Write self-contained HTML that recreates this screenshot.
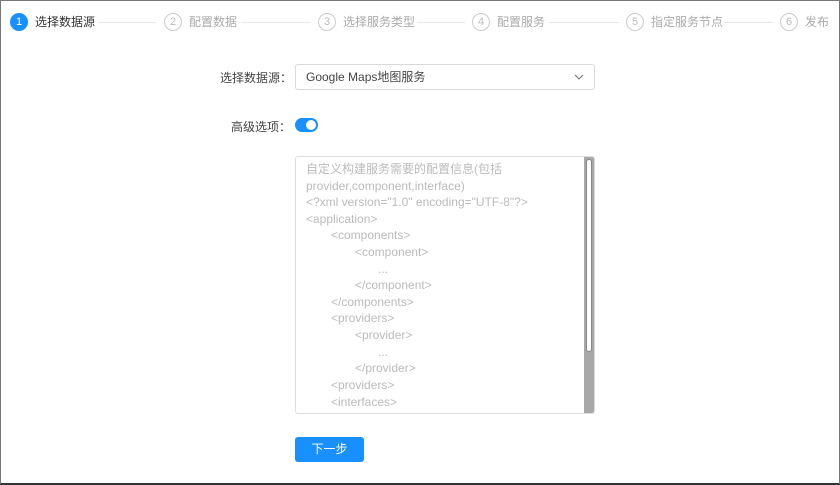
<!DOCTYPE html>
<html><head><meta charset="utf-8"><style>
*{margin:0;padding:0;box-sizing:border-box}
body{width:840px;height:485px;overflow:hidden;background:#fff;font-family:"Liberation Sans","Noto Sans CJK SC",sans-serif;position:relative}
.frame{position:absolute;left:0;top:0;width:840px;height:485px;border:1px solid #777;border-bottom:2px solid #333}
.c{position:absolute;top:13px;width:18px;height:18px;border-radius:50%;border:1px solid #ccc;color:#bbb;font-size:11px;text-align:center;line-height:16px}
.c.a{background:#1890ff;border-color:#1890ff;color:#fff}
.t{position:absolute;top:14px;font-size:12px;color:#aaa;line-height:16px}
.l{position:absolute;top:22px;height:1px;background:#e8e8e8}
.lab{position:absolute;font-size:12px;color:#444}
.sel{position:absolute;left:295px;top:64px;width:300px;height:26px;border:1px solid #d9d9d9;border-radius:3px;font-size:12px;color:#444;padding-left:10px;line-height:24px}
.ta{position:absolute;left:295px;top:156px;width:300px;height:258px;border:1px solid #ddd;border-radius:3px;overflow:hidden}
.ln{position:absolute;font-size:12px;color:#bbb;white-space:pre;line-height:14px}
.btn{position:absolute;left:295px;top:437px;width:69px;height:25px;background:#1890ff;border-radius:3px;color:#fff;font-size:12px;text-align:center;line-height:25px}
</style></head><body>
<div class="frame"></div>
<div class="c a" style="left:10px">1</div><div class="t" style="left:35px;color:#333">选择数据源</div><div class="l" style="left:98px;width:58px"></div>
<div class="c" style="left:164px">2</div><div class="t" style="left:189px">配置数据</div><div class="l" style="left:241px;width:70px"></div>
<div class="c" style="left:318px">3</div><div class="t" style="left:343px">选择服务类型</div><div class="l" style="left:417px;width:48px"></div>
<div class="c" style="left:472px">4</div><div class="t" style="left:497px">配置服务</div><div class="l" style="left:549px;width:70px"></div>
<div class="c" style="left:626px">5</div><div class="t" style="left:651px">指定服务节点</div><div class="l" style="left:725px;width:48px"></div>
<div class="c" style="left:780px">6</div><div class="t" style="left:805px">发布</div>
<div class="lab" style="left:220px;top:69px">选择数据源：</div>
<div class="sel">Google Maps地图服务
<svg style="position:absolute;right:10px;top:8px" width="10" height="8" viewBox="0 0 10 8"><path d="M1 2l4 4 4-4" fill="none" stroke="#777" stroke-width="1.1"/></svg></div>
<div class="lab" style="left:231px;top:118px">高级选项：</div>
<div style="position:absolute;left:295px;top:118px;width:23px;height:14px;border-radius:7px;background:#1890ff"><div style="position:absolute;right:2px;top:2px;width:10px;height:10px;border-radius:50%;background:#fff"></div></div>
<div class="ta">
<div style="position:absolute;right:0;top:0;width:10px;height:258px;background:#a8a8a8"></div>
<div style="position:absolute;right:2px;top:2px;width:6px;height:193px;background:#fff;border:1px solid #888;border-radius:3px"></div>
</div>
<div class="ln" style="left:306px;top:162px">自定义构建服务需要的配置信息(包括</div>
<div class="ln" style="left:306px;top:179px">provider,component,interface)</div>
<div class="ln" style="left:306px;top:195px">&lt;?xml version="1.0" encoding="UTF-8"?&gt;</div>
<div class="ln" style="left:306px;top:212px">&lt;application&gt;</div>
<div class="ln" style="left:331px;top:228px">&lt;components&gt;</div>
<div class="ln" style="left:355px;top:245px">&lt;component&gt;</div>
<div class="ln" style="left:378px;top:262px">...</div>
<div class="ln" style="left:355px;top:278px">&lt;/component&gt;</div>
<div class="ln" style="left:331px;top:295px">&lt;/components&gt;</div>
<div class="ln" style="left:331px;top:311px">&lt;providers&gt;</div>
<div class="ln" style="left:355px;top:328px">&lt;provider&gt;</div>
<div class="ln" style="left:378px;top:345px">...</div>
<div class="ln" style="left:355px;top:361px">&lt;/provider&gt;</div>
<div class="ln" style="left:331px;top:378px">&lt;providers&gt;</div>
<div class="ln" style="left:331px;top:395px">&lt;interfaces&gt;</div>
<div class="btn">下一步</div>
</body></html>
